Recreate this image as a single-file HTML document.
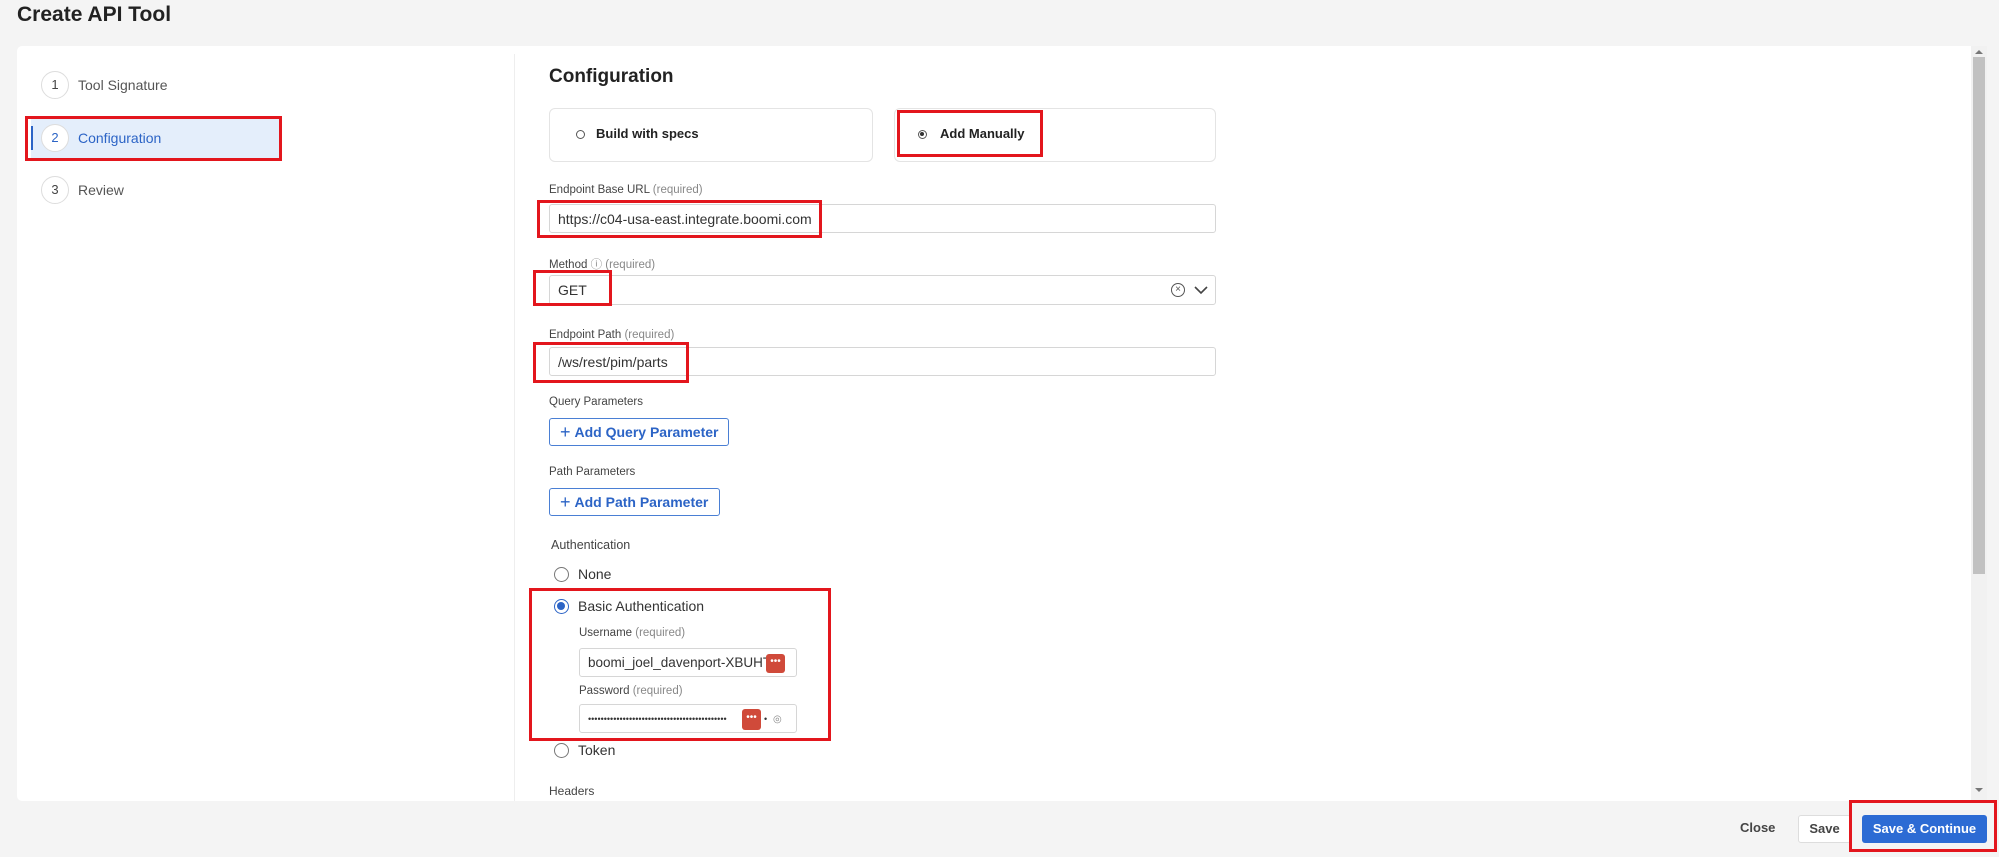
<!DOCTYPE html>
<html><head><meta charset="utf-8"><style>
*{box-sizing:border-box;margin:0;padding:0}
body{width:1999px;height:857px;background:#f4f4f4;font-family:"Liberation Sans",sans-serif;color:#333;position:relative;overflow:hidden}
.a{position:absolute}
.red{position:absolute;border:3px solid #e3161d}
.lbl{position:absolute;font-size:11.5px;color:#444}
.lbl span{color:#888}
.inp{position:absolute;background:#fff;border:1px solid #d6d6d6;border-radius:3px;font-size:14px;color:#333;padding-left:8px;display:flex;align-items:center}
.circ{position:absolute;width:28px;height:28px;border:1.5px solid #ddd;border-radius:50%;background:#fff;font-size:13px;text-align:center;line-height:25px;color:#444}
.step{position:absolute;font-size:14px;color:#555}
.btn{position:absolute;border:1px solid #4a7fd4;border-radius:3px;color:#2c64c6;font-weight:bold;font-size:14px;display:flex;align-items:center;padding-left:10px;background:#fff}
.rad{position:absolute;width:15px;height:15px;border:1.5px solid #777;border-radius:50%;background:#fff}
.rt{position:absolute;font-size:14px;color:#333}
</style></head><body>
<div class="a" style="left:17px;top:3px;font-size:21px;font-weight:bold;color:#222">Create API Tool</div>
<div class="a" style="left:17px;top:46px;width:1970px;height:755px;background:#fff;border-radius:5px"></div>
<div class="a" style="left:1971px;top:46px;width:16px;height:755px;background:#f1f1f1"></div>
<div class="a" style="left:1973px;top:57px;width:12px;height:517px;background:#c1c1c1"></div>
<div class="a" style="left:1975px;top:50px;border-left:4px solid transparent;border-right:4px solid transparent;border-bottom:4px solid #777"></div>
<div class="a" style="left:1975px;top:788px;border-left:4px solid transparent;border-right:4px solid transparent;border-top:4px solid #777"></div>
<div class="a" style="left:514px;top:54px;width:1px;height:747px;background:#eee"></div>
<div class="circ" style="left:41px;top:71px">1</div><div class="step" style="left:78px;top:77px">Tool Signature</div>
<div class="a" style="left:31px;top:119px;width:249px;height:39px;background:#e4eefb"></div>
<div class="a" style="left:31px;top:126px;width:2px;height:24px;background:#2c64c6"></div>
<div class="circ" style="left:41px;top:124px;color:#2c64c6">2</div><div class="step" style="left:78px;top:130px;color:#2c64c6">Configuration</div>
<div class="red" style="left:25px;top:116px;width:257px;height:45px"></div>
<div class="circ" style="left:41px;top:176px">3</div><div class="step" style="left:78px;top:182px">Review</div>
<div class="a" style="left:549px;top:66px;font-size:19px;font-weight:bold;color:#222">Configuration</div>
<div class="a" style="left:549px;top:108px;width:324px;height:54px;border:1px solid #e4e4e4;border-radius:6px"></div>
<div class="a" style="left:576px;top:130px;width:9px;height:9px;border:1.5px solid #555;border-radius:50%"></div>
<div class="a" style="left:596px;top:126px;font-size:13px;font-weight:bold;color:#222">Build with specs</div>
<div class="a" style="left:894px;top:108px;width:322px;height:54px;border:1px solid #e4e4e4;border-radius:6px"></div>
<div class="a" style="left:918px;top:130px;width:9px;height:9px;border:1.5px solid #555;border-radius:50%"><div style="width:4px;height:4px;background:#333;border-radius:50%;margin:1px"></div></div>
<div class="a" style="left:940px;top:126px;font-size:13px;font-weight:bold;color:#222">Add Manually</div>
<div class="red" style="left:897px;top:110px;width:146px;height:47px"></div>
<div class="lbl" style="left:549px;top:184px">Endpoint Base URL <span>(required)</span></div>
<div class="inp" style="left:549px;top:204px;width:667px;height:29px">https://c04-usa-east.integrate.boomi.com</div>
<div class="red" style="left:537px;top:200px;width:285px;height:38px"></div>
<div class="lbl" style="left:549px;top:256px">Method <span>ⓘ (required)</span></div>
<div class="inp" style="left:549px;top:275px;width:667px;height:30px">GET</div>
<div class="a" style="left:1171px;top:283px;width:14px;height:14px;border:1.3px solid #555;border-radius:50%;font-size:10px;line-height:11px;text-align:center;color:#555">×</div>
<svg class="a" style="left:1193px;top:284px" width="16" height="12"><path d="M2 3 L8 9 L14 3" stroke="#444" stroke-width="1.6" fill="none"/></svg>
<div class="red" style="left:533px;top:270px;width:79px;height:36px"></div>
<div class="lbl" style="left:549px;top:329px">Endpoint Path <span>(required)</span></div>
<div class="inp" style="left:549px;top:347px;width:667px;height:29px">/ws/rest/pim/parts</div>
<div class="red" style="left:533px;top:342px;width:156px;height:41px"></div>
<div class="lbl" style="left:549px;top:396px">Query Parameters</div>
<div class="btn" style="left:549px;top:418px;width:180px;height:28px"><span style="font-weight:normal;font-size:18px;margin-right:4px">+</span>Add Query Parameter</div>
<div class="lbl" style="left:549px;top:466px">Path Parameters</div>
<div class="btn" style="left:549px;top:488px;width:171px;height:28px"><span style="font-weight:normal;font-size:18px;margin-right:4px">+</span>Add Path Parameter</div>
<div class="a" style="left:551px;top:538px;font-size:12.5px;color:#444">Authentication</div>
<div class="rad" style="left:554px;top:567px"></div><div class="rt" style="left:578px;top:566px">None</div>
<div class="rad" style="left:554px;top:599px;border-color:#2c64c6"><div style="width:8px;height:8px;background:#2c64c6;border-radius:50%;margin:2px"></div></div><div class="rt" style="left:578px;top:598px">Basic Authentication</div>
<div class="lbl" style="left:579px;top:627px">Username <span>(required)</span></div>
<div class="inp" style="left:579px;top:648px;width:218px;height:29px;overflow:hidden;white-space:nowrap;font-size:13.5px">boomi_joel_davenport-XBUHTV</div>
<div class="a" style="left:766px;top:654px;width:19px;height:19px;background:#d04a3a;border-radius:3px;color:#fff;font-size:10px;text-align:center;line-height:15px">•••</div>
<div class="lbl" style="left:579px;top:685px">Password <span>(required)</span></div>
<div class="inp" style="left:579px;top:704px;width:218px;height:29px;overflow:hidden;white-space:nowrap;font-size:9px;letter-spacing:0">••••••••••••••••••••••••••••••••••••••••••••</div>
<div class="a" style="left:742px;top:709px;width:19px;height:21px;background:#d04a3a;border-radius:3px;color:#fff;font-size:10px;text-align:center;line-height:18px">•••</div>
<div class="a" style="left:762px;top:710px;width:30px;height:18px;background:#fff"></div>
<div class="a" style="left:764px;top:714px;font-size:9px;color:#333">•</div>
<div class="a" style="left:773px;top:714px;font-size:10px;color:#888">◎</div>
<div class="red" style="left:529px;top:588px;width:302px;height:153px"></div>
<div class="rad" style="left:554px;top:743px"></div><div class="rt" style="left:578px;top:742px">Token</div>
<div class="lbl" style="left:549px;top:784px;font-size:12px">Headers</div>
<div class="a" style="left:1740px;top:820px;font-size:13px;font-weight:bold;color:#444">Close</div>
<div class="a" style="left:1798px;top:815px;width:53px;height:28px;border:1px solid #ddd;border-radius:3px;background:#fff;font-size:13px;font-weight:bold;color:#444;text-align:center;line-height:26px">Save</div>
<div class="a" style="left:1862px;top:815px;width:125px;height:28px;border-radius:3px;background:#2c6bd4;font-size:13px;font-weight:bold;color:#fff;text-align:center;line-height:28px">Save &amp; Continue</div>
<div class="red" style="left:1849px;top:800px;width:148px;height:52px"></div>
</body></html>
